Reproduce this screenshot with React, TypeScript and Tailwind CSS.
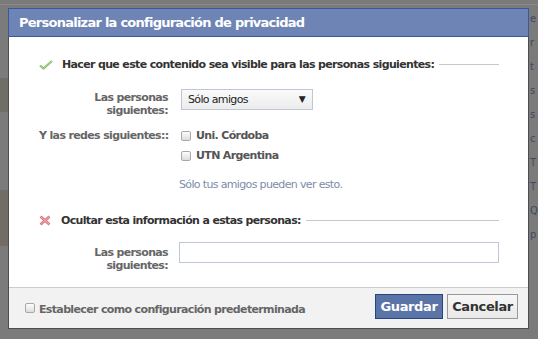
import React from 'react';

function Checkbox() {
  return (
    <span className="inline-block w-[10px] h-[10px] rounded-[2px] border border-[#a9a9a9] bg-gradient-to-b from-[#fdfdfd] to-[#dcdcdc] shrink-0" />
  );
}

function CheckIcon() {
  return (
    <svg width="14" height="10" viewBox="0 0 14 10" className="shrink-0">
      <path d="M1 5.5 L4.5 8.5 L13 1" fill="none" stroke="#7ab55c" strokeWidth="2.2" strokeLinejoin="round" />
      <path d="M1 5.5 L4.5 8.5 L13 1" fill="none" stroke="#c6e6a8" strokeWidth="0.8" />
    </svg>
  );
}

function CrossIcon() {
  return (
    <svg width="12" height="11" viewBox="0 0 12 11" className="shrink-0">
      <path d="M1.5 1.5 L10.5 9.5 M10.5 1.5 L1.5 9.5" fill="none" stroke="#d9707a" strokeWidth="2.6" />
      <path d="M1.5 1.5 L10.5 9.5 M10.5 1.5 L1.5 9.5" fill="none" stroke="#f3c5c9" strokeWidth="0.8" />
    </svg>
  );
}

export default function App() {
  return (
    <div className="relative w-[538px] h-[339px] overflow-hidden bg-[#7b7b7b] font-['DejaVu_Sans',sans-serif]">
      {/* page behind the overlay */}
      <div className="absolute left-0 top-0 w-[538px] h-[5px] border-b border-[#8a8a8a]" />
      <div className="absolute left-0 top-[78px] w-[8px] h-[34px] bg-[#6f6f66]" />
      <div className="absolute left-0 top-[190px] w-[8px] h-[56px] bg-[#716c64]" />
      <div className="absolute left-[530px] top-[10px] w-[8px] h-[300px] overflow-hidden flex flex-col gap-[14px] text-[10px] leading-[10px] text-[#3e4a62] pt-[4px]">
        <span>e</span><span>r</span><span>t</span><span>s</span><span>s</span><span>c</span><span>T</span><span>T</span><span>Q</span><span>p</span>
      </div>

      <div className="relative ml-[8px] mt-[8px] w-[521px] border-l border-r border-b border-[#4d4d4d] bg-white tracking-[-0.65px]">
        <div className="h-[29px] bg-[#6d84b4] border border-[#3b5998] -mx-px flex items-center pl-[10px]">
          <span className="text-[13px] font-bold text-white tracking-[-0.75px]">Personalizar la configuración de privacidad</span>
        </div>

        <div className="pl-[30px] pr-[29px] pt-[21px] pb-[15px] text-[11px] leading-[13px]">
          <div className="flex items-center">
            <CheckIcon />
            <span className="ml-[9px] font-bold text-[#333] whitespace-nowrap">Hacer que este contenido sea visible para las personas siguientes:</span>
            <div className="flex-1 h-px bg-[#c8c8c8] ml-[5px]" />
          </div>

          <div className="flex mt-[18px]">
            <div className="w-[129px] text-right font-bold text-[#666] pt-[2px]">Las personas<br />siguientes:</div>
            <div className="ml-[13px] w-[132px] h-[21px] border border-[#bdc7d8] bg-gradient-to-b from-[#fafafa] to-[#ececec] flex items-center justify-between pl-[6px] pr-[7px] text-[#222]">
              <span>Sólo amigos</span>
              <span className="text-[9px]">▼</span>
            </div>
          </div>

          <div className="flex mt-[12px]">
            <div className="w-[129px] text-right font-bold text-[#666] whitespace-nowrap">Y las redes siguientes::</div>
            <div className="ml-[13px] flex flex-col gap-[7px]">
              <label className="flex items-center gap-[5px] font-bold text-[#555]"><Checkbox />Uni. Córdoba</label>
              <label className="flex items-center gap-[5px] font-bold text-[#555]"><Checkbox />UTN Argentina</label>
            </div>
          </div>

          <div className="ml-[140px] mt-[16px] text-[#7e8ca8]">Sólo tus amigos pueden ver esto.</div>

          <div className="flex items-center mt-[23px]">
            <CrossIcon />
            <span className="ml-[10px] font-bold text-[#333] whitespace-nowrap">Ocultar esta información a estas personas:</span>
            <div className="flex-1 h-px bg-[#c8c8c8] ml-[5px]" />
          </div>

          <div className="flex mt-[15px]">
            <div className="w-[129px] text-right font-bold text-[#666] pt-[4px]">Las personas<br />siguientes:</div>
            <input className="ml-[11px] flex-1 h-[21px] border border-[#bdc7d8] bg-white outline-none" />
          </div>
        </div>

        <div className="h-[41px] bg-[#f2f2f2] border-t border-[#ccc] flex items-center pl-[16px] pr-[10px]">
          <Checkbox />
          <span className="ml-[4px] mt-[4px] text-[11px] font-bold text-[#666]">Establecer como configuración predeterminada</span>
          <div className="ml-auto flex gap-[4px] -mt-[3px]">
            <button className="h-[25px] w-[68px] border border-[#29447e] bg-[#5b74a8] text-white text-[13px] font-bold tracking-[-0.4px]">Guardar</button>
            <button className="h-[25px] w-[71px] border border-[#999] bg-gradient-to-b from-[#f7f7f7] to-[#e8e8e8] text-[#333] text-[13px] font-bold tracking-[-0.4px]">Cancelar</button>
          </div>
        </div>
      </div>
    </div>
  );
}
